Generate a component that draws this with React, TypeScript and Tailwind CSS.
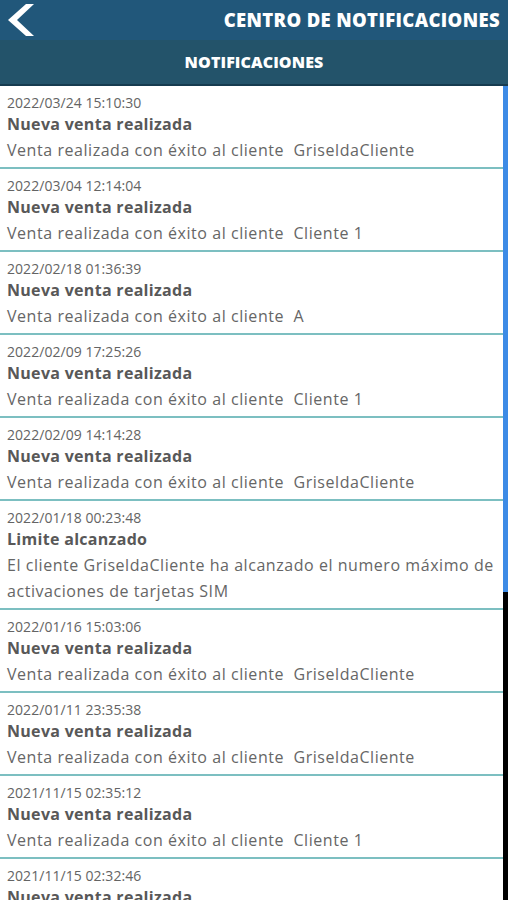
import React from "react";

type Item = { date: string; title: string; body: React.ReactNode };

const items: Item[] = [
  { date: "2022/03/24 15:10:30", title: "Nueva venta realizada", body: "Venta realizada con éxito al cliente  GriseldaCliente" },
  { date: "2022/03/04 12:14:04", title: "Nueva venta realizada", body: "Venta realizada con éxito al cliente  Cliente 1" },
  { date: "2022/02/18 01:36:39", title: "Nueva venta realizada", body: "Venta realizada con éxito al cliente  A" },
  { date: "2022/02/09 17:25:26", title: "Nueva venta realizada", body: "Venta realizada con éxito al cliente  Cliente 1" },
  { date: "2022/02/09 14:14:28", title: "Nueva venta realizada", body: "Venta realizada con éxito al cliente  GriseldaCliente" },
  {
    date: "2022/01/18 00:23:48",
    title: "Limite alcanzado",
    body: "El cliente GriseldaCliente ha alcanzado el numero máximo de activaciones de tarjetas SIM",
  },
  { date: "2022/01/16 15:03:06", title: "Nueva venta realizada", body: "Venta realizada con éxito al cliente  GriseldaCliente" },
  { date: "2022/01/11 23:35:38", title: "Nueva venta realizada", body: "Venta realizada con éxito al cliente  GriseldaCliente" },
  { date: "2021/11/15 02:35:12", title: "Nueva venta realizada", body: "Venta realizada con éxito al cliente  Cliente 1" },
  { date: "2021/11/15 02:32:46", title: "Nueva venta realizada", body: "Venta realizada con éxito al cliente  Cliente 1" },
];

export default function App() {
  return (
    <div
      className="w-[508px] h-[900px] overflow-hidden bg-white flex flex-col"
      style={{ fontFamily: '"Open Sans", "Noto Sans", sans-serif' }}
    >
      <div className="h-[40px] bg-[#21577a] flex items-center justify-between pl-[5px] pr-[8px] shrink-0">
        <svg width="30" height="32" viewBox="0 0 30 32">
          <path d="M21 0 L29 0 L12 16 L29 32 L21 32 L3 16 Z" fill="#ffffff" />
        </svg>
        <span className="text-white text-[18.5px] font-extrabold tracking-[0.35px]">CENTRO DE NOTIFICACIONES</span>
      </div>
      <div className="h-[46px] bg-[#23536a] border-b-2 border-[#163b4f] flex items-center justify-center shrink-0">
        <span className="text-white text-[16px] font-extrabold tracking-[0.1px]">NOTIFICACIONES</span>
      </div>
      <div className="flex flex-1 min-h-0">
        <div className="flex-1 flex flex-col">
          {items.map((it, i) => (
            <div key={i} className="pl-[7px] pr-[4px] pt-[7px] pb-[4px] border-b-2 border-[#7cbfc1] shrink-0">
              <div className="text-[14px] leading-[19px] text-[#646464] tracking-[0.05px]">{it.date}</div>
              <div className="text-[16px] leading-[25px] font-bold text-[#585858] tracking-[0.3px]">{it.title}</div>
              <div className="text-[16px] leading-[26px] text-[#666666] tracking-[0.55px] whitespace-pre-wrap">{it.body}</div>
            </div>
          ))}
        </div>
        <div className="w-[5px] flex flex-col shrink-0">
          <div className="h-[506px] bg-[#3d8be6]" />
          <div className="flex-1 bg-black" />
        </div>
      </div>
    </div>
  );
}
